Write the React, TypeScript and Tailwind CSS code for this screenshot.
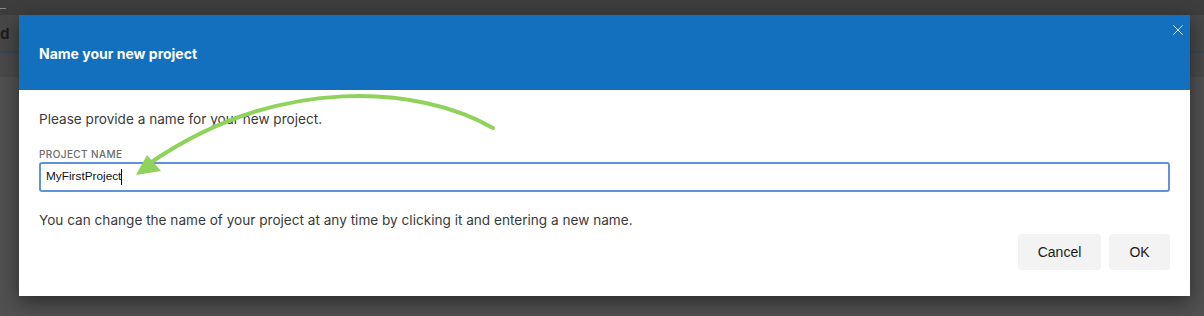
import { X } from 'lucide-react';

function BackgroundApp() {
  return (
    <div className="flex h-full w-full flex-col bg-[#4e4e4e]">
      <div className="relative h-[15px] bg-[#3d3d3d]">
        <div className="absolute left-0 top-[8px] h-px w-[6px] bg-[#8a8a8a]" />
      </div>
      <div className="flex h-[36px] items-center bg-[#474747]">
        <span className="text-[15px] font-bold leading-none text-[#1e1e1e] [font-family:Inter,sans-serif]">d</span>
      </div>
      <div className="h-[2px] bg-[#3a4556]" />
      <div className="h-[24px] bg-[#494949]" />
      <div className="flex-1 bg-[#505050]" />
    </div>
  );
}

function Arrow() {
  return (
    <svg className="pointer-events-none absolute left-0 top-0" width="1204" height="316" viewBox="0 0 1204 316">
      <path d="M493 128 C420 86 280 74 150 163" fill="none" stroke="#8fd35a" strokeWidth="4" strokeLinecap="round" />
      <polygon points="136,175 147,155 161,171" fill="#8fd35a" />
    </svg>
  );
}

export default function App() {
  return (
    <div className="relative h-[316px] w-[1204px] overflow-hidden [font-family:Inter,'Liberation_Sans',sans-serif]">
      <BackgroundApp />
      <div className="absolute left-[19px] top-[15px] flex h-[281px] w-[1171px] flex-col bg-white shadow-[0_6px_18px_rgba(0,0,0,0.45)]">
        <div className="relative flex h-[75px] items-center bg-[#1270bf] px-5 pt-[2px]">
          <h1 className="text-[14px] font-bold text-white">Name your new project</h1>
          <button className="absolute right-[3px] top-[6px] text-white">
            <X size={18} strokeWidth={1.1} />
          </button>
        </div>
        <div className="flex flex-1 flex-col px-5">
          <p className="mt-[19px] text-[13.6px] leading-[20px] text-[#3a3a3a]">Please provide a name for your new project.</p>
          <label className="mt-[19px] text-[10px] font-medium uppercase leading-[12px] tracking-[0.04em] text-[#6b6b6b]">
            Project name
          </label>
          <div className="mt-[2px] flex h-[30px] items-center rounded-[3px] border-2 border-[#5f93dc] px-[5px]">
            <span className="text-[11.8px] text-[#111] [font-family:'Liberation_Sans',Arial,sans-serif]">MyFirstProject</span>
            <span className="h-[16px] w-px bg-[#111]" />
          </div>
          <p className="mt-[18px] text-[13.6px] leading-[20px] text-[#3a3a3a]">
            You can change the name of your project at any time by clicking it and entering a new name.
          </p>
          <div className="mt-[4px] flex justify-end gap-2">
            <button className="h-[36px] w-[83px] rounded-[4px] bg-[#f3f3f3] text-[14px] text-[#1a1a1a] [font-family:'Liberation_Sans',Arial,sans-serif]">
              Cancel
            </button>
            <button className="h-[36px] w-[61px] rounded-[4px] bg-[#f3f3f3] text-[14px] text-[#1a1a1a] [font-family:'Liberation_Sans',Arial,sans-serif]">
              OK
            </button>
          </div>
        </div>
      </div>
      <Arrow />
    </div>
  );
}
